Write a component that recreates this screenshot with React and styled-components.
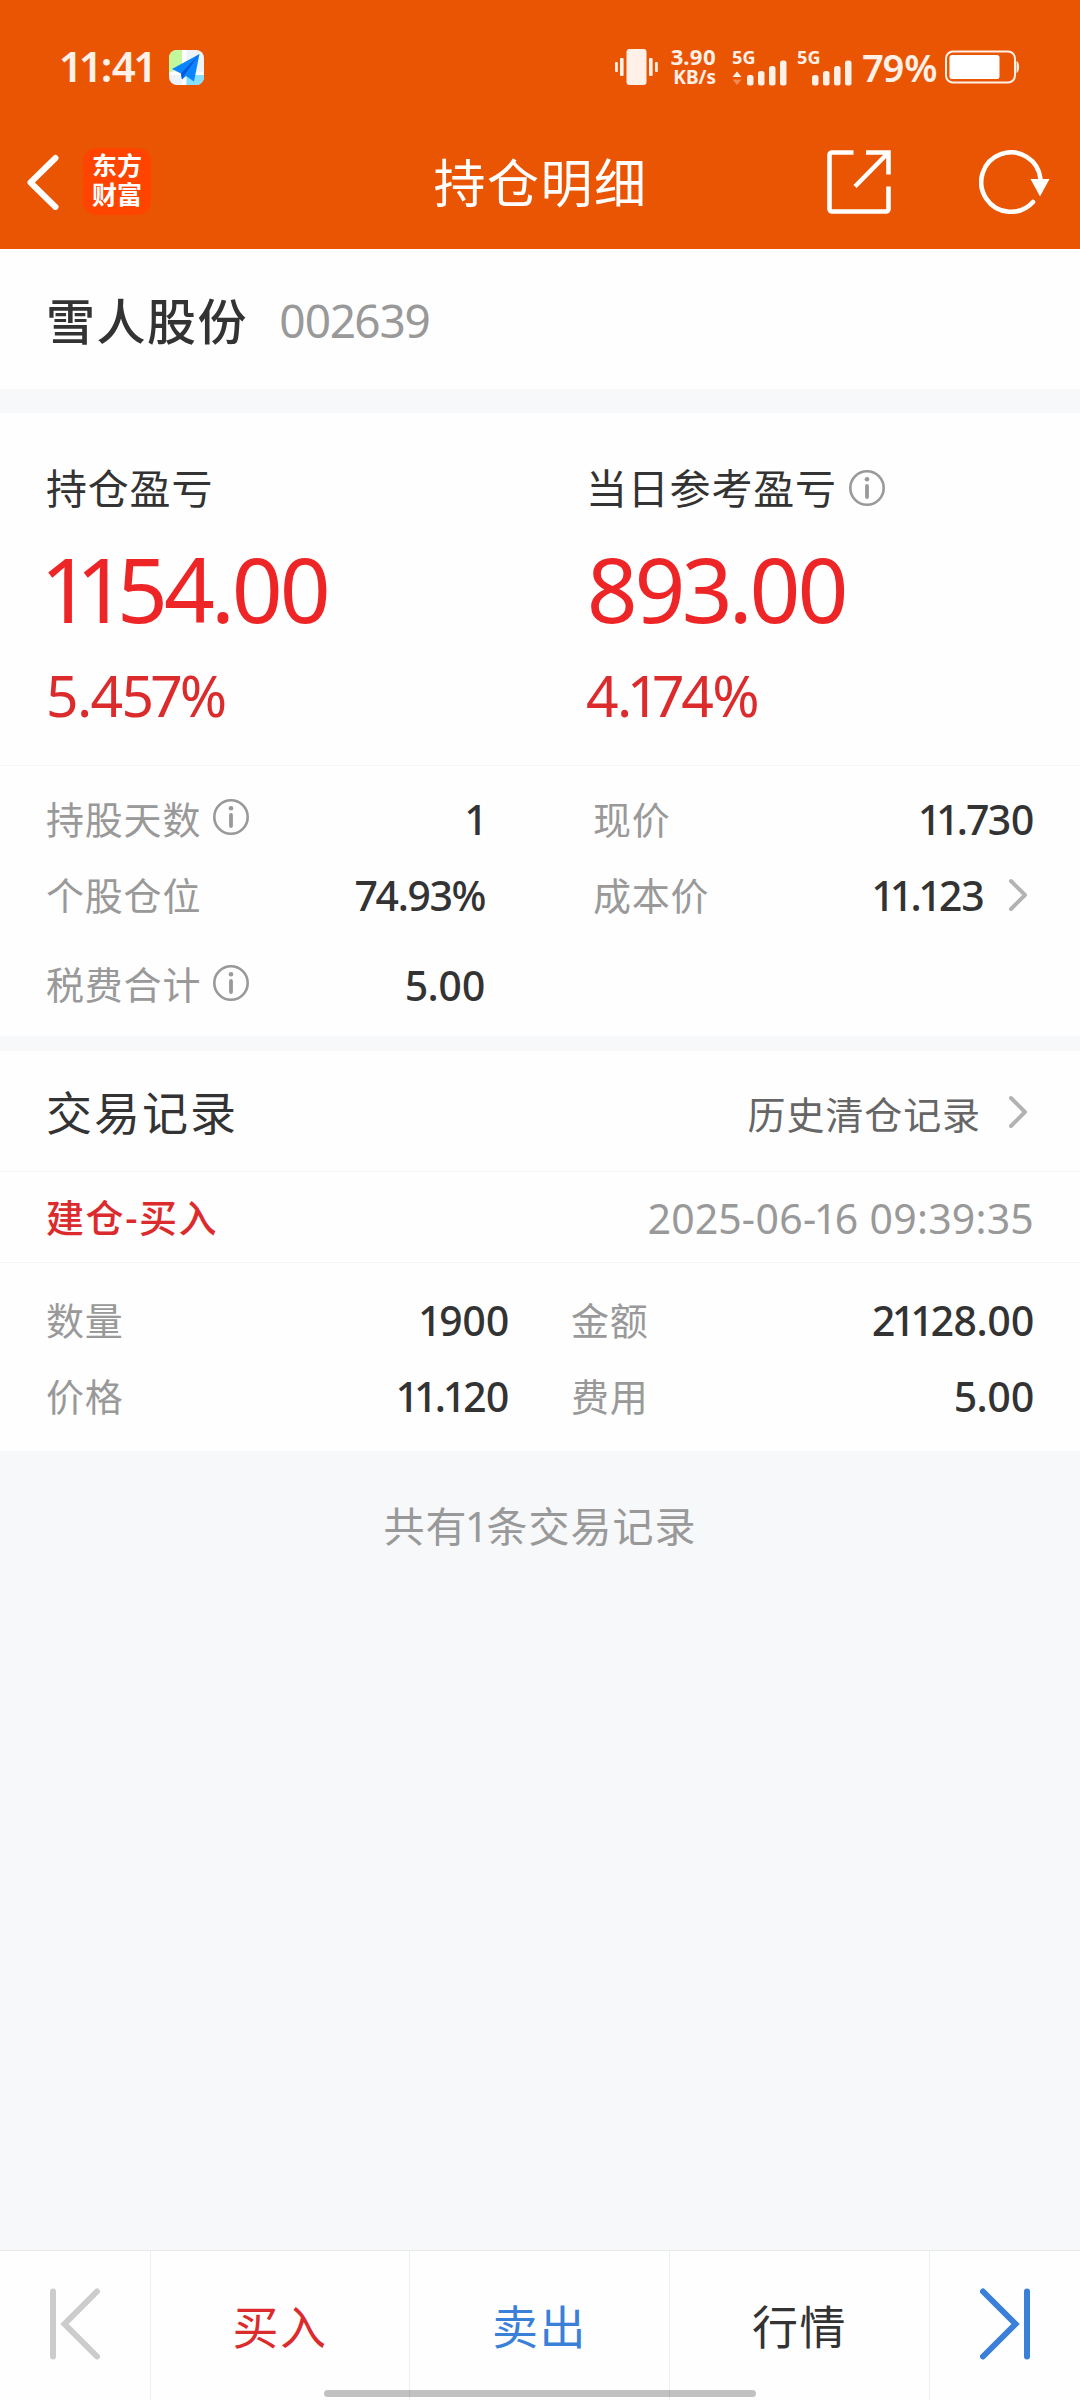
import React from 'react'
import styled, { createGlobalStyle } from 'styled-components'

const GlobalStyle = createGlobalStyle`
	* {
		box-sizing: border-box;
	}

	body {
		margin: 0;
		background: #f7f8fa;
		font-family: 'Noto Sans', 'Noto Sans CJK SC', sans-serif;
		font-variant-numeric: proportional-nums;
		color: #333;
	}
`

const Page = styled.div`
	width: 1080px;
	height: 2400px;
	display: flex;
	flex-direction: column;
	background: #f7f8fa;
	overflow: hidden;
`

const Header = styled.header`
	height: 249px;
	background: #ea5504;
	color: #fff;
`

const StatusBar = styled.div`
	height: 115px;
	padding: 19px 60px 0 61px;
	display: flex;
	align-items: center;
	color: #fff0e8;
`

const Clock = styled.span`
	width: 108px;
	font-size: 42px;
	font-weight: 600;
	line-height: 50px;
	padding-bottom: 2px;
	letter-spacing: -0.6px;
	white-space: nowrap;
`

const StatusRight = styled.div`
	margin-left: auto;
	display: flex;
	align-items: center;
`

const Speed = styled.div`
	width: 46px;
	margin-left: 12px;
	display: flex;
	flex-direction: column;
	align-items: flex-end;
	font-size: 22px;
	font-weight: 700;
	line-height: 21px;
	white-space: nowrap;
`

const SpeedUnit = styled.span`
	font-size: 19px;
`

const Signal = styled.div`
	width: 55px;
	height: 38px;
	margin-left: ${props => props.$gap}px;
	display: flex;
	flex-direction: column;
	position: relative;
`

const SignalLabel = styled.span`
	font-size: 18px;
	font-weight: 700;
	line-height: 18px;
`

const SignalBars = styled.svg`
	position: absolute;
	left: 0;
	top: 0;
`

const Percent = styled.span`
	width: 75px;
	margin: 0 7px 0 11px;
	padding-bottom: 1px;
	font-size: 38px;
	font-weight: 600;
	line-height: 50px;
	letter-spacing: -0.6px;
	white-space: nowrap;
`

const NavBar = styled.div`
	height: 134px;
	padding: 0 30px 1px 26px;
	display: grid;
	grid-template-columns: 1fr auto 1fr;
	align-items: center;
`

const NavLeft = styled.div`
	display: flex;
	align-items: center;
	gap: 23px;
`

const NavRight = styled.div`
	display: flex;
	align-items: center;
	justify-content: flex-end;
	gap: 88px;
`

const Logo = styled.div`
	width: 68px;
	height: 67px;
	border-radius: 14px;
	background: #ff4400;
	font-family: 'Noto Sans CJK SC', sans-serif;
	font-size: 25px;
	font-weight: 700;
	line-height: 29px;
	padding-top: 2px;
	text-align: center;
`

const Title = styled.h1`
	margin: 0;
	padding: 2px 0 0 5px;
	font-size: 52px;
	font-weight: 400;
	line-height: 70px;
	letter-spacing: 1.5px;
`

const Section = styled.section`
	background: #fefefe;
	margin-bottom: ${props => props.$gap || 0}px;
`

const StockRow = styled.div`
	height: 140px;
	padding: 0 46px 1px;
	display: flex;
	align-items: center;
`

const StockName = styled.span`
	font-size: 49px;
	font-weight: 500;
	letter-spacing: 1.5px;
	margin-right: 31px;
`

const StockCode = styled.span`
	padding-top: 2px;
	font-size: 46px;
	color: #999;
	letter-spacing: -1.3px;
`

const Profits = styled.div`
	height: 353px;
	padding: 47px 46px 0;
	display: grid;
	grid-template-columns: 540px 1fr;
	border-bottom: 1px solid #f4f5f6;
`

const ProfitLabel = styled.div`
	display: flex;
	align-items: center;
	gap: 12px;
	font-size: 41px;
	line-height: 56px;
	letter-spacing: 0.8px;
`

const ProfitValue = styled.div`
	margin-top: 23px;
	font-size: 89px;
	line-height: 100px;
	letter-spacing: -3.8px;
	color: #ee2526;
	white-space: nowrap;
`

const ProfitRate = styled.div`
	margin-top: 24px;
	font-size: 57px;
	line-height: 64px;
	letter-spacing: -1.7px;
	color: #dc2b2c;
	white-space: nowrap;
`

const Details = styled.div`
	padding: 15px 46px 0;
	display: grid;
	grid-template-columns: 439px 441px;
	column-gap: 108px;
`

const TradeDetails = styled(Details)`
	padding: 19px 46px 17px;
	grid-template-columns: 463px 463px;
	column-gap: 62px;
`

const Field = styled.div`
	height: ${props => props.$height || 76}px;
	display: flex;
	align-items: center;
`

const FieldLabel = styled.span`
	display: flex;
	align-items: center;
	gap: 12px;
	padding-bottom: 4px;
	font-size: 38px;
	letter-spacing: 0.8px;
	color: #999;
`

const FieldValue = styled.span`
	margin-left: auto;
	font-size: 41px;
	font-weight: 500;
	letter-spacing: ${props => (props.$percent ? '-1.5px' : '-0.7px')};
`

const ArrowSlot = styled.span`
	display: flex;
	margin: 0 6px 0 24px;
`

const RecordsHead = styled.div`
	height: 121px;
	padding: 0 46px 1px;
	display: flex;
	align-items: center;
	justify-content: space-between;
	border-bottom: 1px solid #f4f5f6;
`

const RecordsTitle = styled.h2`
	margin: 0;
	padding-bottom: 2px;
	font-size: 46px;
	font-weight: 400;
	letter-spacing: 2px;
`

const HistoryLink = styled.span`
	display: flex;
	align-items: center;
	gap: 3px;
	padding-top: 3px;
	font-size: 38px;
	letter-spacing: 0.9px;
	color: #666;
`

const TradeHead = styled.div`
	height: 91px;
	padding: 0 46px;
	display: flex;
	align-items: center;
	justify-content: space-between;
	border-bottom: 1px solid #f4f5f6;
`

const TradeType = styled.span`
	padding-bottom: 3px;
	font-size: 38px;
	font-weight: 500;
	letter-spacing: 1.6px;
	color: #dc2b2c;
`

const TradeTime = styled.span`
	padding-top: 1px;
	font-size: 41px;
	color: #999;
	letter-spacing: 0.2px;
`

const Summary = styled.p`
	margin: 46px 0 0;
	font-size: 41px;
	line-height: 58px;
	letter-spacing: 1px;
	text-align: center;
	color: #999;
`

const Footer = styled.footer`
	position: relative;
	height: 150px;
	margin-top: auto;
	display: grid;
	grid-template-columns: 151px 259px 260px 260px 150px;
	background: #fefefe;
	border-top: 1px solid #e8eaec;
`

const FooterItem = styled.button`
	padding: 0 0 3px;
	display: flex;
	align-items: center;
	justify-content: center;
	background: none;
	border: none;
	border-right: 1px solid #eceef0;
	font-family: inherit;
	font-size: 46px;
	letter-spacing: 1.5px;
	color: ${props => props.color || '#333'};

	&:last-of-type {
		border-right: none;
	}
`

const HomeIndicator = styled.div`
	position: absolute;
	left: 324px;
	bottom: 3px;
	width: 432px;
	height: 7px;
	border-radius: 4px;
	background: rgba(0, 0, 0, 0.24);
`

const InfoIcon = () => (
	<svg width="36" height="36" viewBox="0 0 36 36" fill="none">
		<circle cx="18" cy="18" r="16.700" stroke="#999" strokeWidth="2.600" />
		<circle cx="18" cy="9.200" r="2.300" fill="#999" />
		<path d="M18 16v11" stroke="#999" strokeWidth="3.800" strokeLinecap="round" />
	</svg>
)

const ArrowIcon = () => (
	<svg width="20" height="34" viewBox="0 0 20 34" fill="none">
		<path d="M3 3l14 14L3 31" stroke="#b3b3b3" strokeWidth="4" strokeLinecap="round" strokeLinejoin="round" />
	</svg>
)

const BackIcon = () => (
	<svg width="34" height="56" viewBox="0 0 34 56" fill="none">
		<path d="M29.500 4L4.500 28.500l25 24.500" stroke="#fff" strokeWidth="6" strokeLinecap="round" strokeLinejoin="round" />
	</svg>
)

const ShareIcon = () => (
	<svg width="64" height="64" viewBox="0 0 64 64" fill="none" stroke="#fff" strokeWidth="4.600">
		<path d="M26.500 2.500H5a2.500 2.500 0 0 0-2.500 2.500v54a2.500 2.500 0 0 0 2.500 2.500h54a2.500 2.500 0 0 0 2.500-2.500V36.500" />
		<path d="M39 2.500h22.500V24.500M61 3L28 36.500" />
	</svg>
)

const RefreshIcon = () => (
	<svg width="71" height="64" viewBox="0 0 71 64" fill="none">
		<path d="M61.500 29A29.700 29.700 0 1 0 54 52" stroke="#fff" strokeWidth="4.600" strokeLinecap="round" />
		<path d="M51.500 29h19l-9.500 17.500z" fill="#fff" />
	</svg>
)

const MapIcon = () => (
	<svg width="35" height="35" viewBox="0 0 35 35">
		<clipPath id="map">
			<rect width="35" height="35" rx="8" />
		</clipPath>
		<g clipPath="url(#map)">
			<rect width="35" height="35" fill="#eef3f8" />
			<path d="M0 0h13v16L0 23z" fill="#c3f79c" />
			<path d="M13 0h4.500v35H13zM0 22h35v3H0z" fill="#fff" />
			<path d="M17.500 25H35v10H17.500z" fill="#86e0ff" />
			<path d="M30.500 4L3 19l9 4.500 1 6 4-3.500 8 5.500z" fill="#0a84ff" />
			<path d="M30.500 4L12 23.500l1 6 2-4z" fill="#0757d8" />
		</g>
	</svg>
)

const VibrateIcon = () => (
	<svg width="43" height="36" viewBox="0 0 43 36" fill="#fff0e8">
		<rect x="11.500" width="20" height="36" rx="3" />
		<rect x="5" y="9" width="3.600" height="18" rx="1" />
		<rect x="34" y="9" width="3.600" height="18" rx="1" />
		<rect y="13" width="2.800" height="10" rx="1" />
		<rect x="40" y="13" width="2.800" height="10" rx="1" />
	</svg>
)

const BatteryIcon = () => (
	<svg width="75" height="34" viewBox="0 0 75 34">
		<rect x="1" y="1.500" width="69" height="31" rx="7" fill="none" stroke="#fff0e8" strokeWidth="2" />
		<rect x="4.500" y="5" width="50" height="24" rx="2.500" fill="#fff" />
		<path d="M71.500 11c3.500 1 3.500 11 0 12z" fill="#fff0e8" />
	</svg>
)

const SignalMeter = ({ gap, traffic }) => (
	<Signal $gap={gap}>
		<SignalLabel>5G</SignalLabel>
		<SignalBars width="55" height="38" viewBox="0 0 55 38" fill="#fff0e8">
			{traffic && <path d="M.5 29L5 23.500l4.500 5.500z" />}
			{traffic && <path d="M.5 31.500L5 37l4.500-5.500z" opacity="0.35" />}
			<rect x="15" y="27" width="6.500" height="10.500" rx="2.500" />
			<rect x="26" y="23" width="6.500" height="14.500" rx="2.500" />
			<rect x="37" y="18" width="6.500" height="19.500" rx="2.500" />
			<rect x="48" y="12.500" width="6.500" height="25" rx="2.500" />
		</SignalBars>
	</Signal>
)

const FirstIcon = () => (
	<svg width="50" height="72" viewBox="0 0 50 72" fill="none" stroke="#ccc" strokeWidth="6" strokeLinecap="round">
		<path d="M3 3.500v65M47 3.500L14.500 36 47 68.500" />
	</svg>
)

const LastIcon = () => (
	<svg width="50" height="72" viewBox="0 0 50 72" fill="none" stroke="#3a80d9" strokeWidth="6" strokeLinecap="round">
		<path d="M47 3.500v65M3 3.500L35.500 36 3 68.500" />
	</svg>
)

const details = [
	{ label: '持股天数', value: '1', info: true },
	{ label: '现价', value: '11.730' },
	{ label: '个股仓位', value: '74.93%', percent: true },
	{ label: '成本价', value: '11.123', arrow: true },
	{ label: '税费合计', value: '5.00', info: true, height: 103 }
]

const trade = [
	{ label: '数量', value: '1900' },
	{ label: '金额', value: '21128.00' },
	{ label: '价格', value: '11.120' },
	{ label: '费用', value: '5.00' }
]

const renderField = ({ label, value, info, arrow, percent, height }) => (
	<Field key={label} $height={height}>
		<FieldLabel>
			{label}
			{info && <InfoIcon />}
		</FieldLabel>
		<FieldValue $percent={percent}>{value}</FieldValue>
		{arrow && (
			<ArrowSlot>
				<ArrowIcon />
			</ArrowSlot>
		)}
	</Field>
)

const App = () => (
	<Page>
		<GlobalStyle />
		<Header>
			<StatusBar>
				<Clock>11:41</Clock>
				<MapIcon />
				<StatusRight>
					<VibrateIcon />
					<Speed>
						<span>3.90</span>
						<SpeedUnit>KB/s</SpeedUnit>
					</Speed>
					<SignalMeter gap={16} traffic />
					<SignalMeter gap={10} />
					<Percent>79%</Percent>
					<BatteryIcon />
				</StatusRight>
			</StatusBar>
			<NavBar>
				<NavLeft>
					<BackIcon />
					<Logo>
						东方
						<br />
						财富
					</Logo>
				</NavLeft>
				<Title>持仓明细</Title>
				<NavRight>
					<ShareIcon />
					<RefreshIcon />
				</NavRight>
			</NavBar>
		</Header>

		<Section $gap={24}>
			<StockRow>
				<StockName>雪人股份</StockName>
				<StockCode>002639</StockCode>
			</StockRow>
		</Section>

		<Section $gap={15}>
			<Profits>
				<div>
					<ProfitLabel>持仓盈亏</ProfitLabel>
					<ProfitValue>1154.00</ProfitValue>
					<ProfitRate>5.457%</ProfitRate>
				</div>
				<div>
					<ProfitLabel>
						当日参考盈亏
						<InfoIcon />
					</ProfitLabel>
					<ProfitValue>893.00</ProfitValue>
					<ProfitRate>4.174%</ProfitRate>
				</div>
			</Profits>
			<Details>{details.map(renderField)}</Details>
		</Section>

		<Section>
			<RecordsHead>
				<RecordsTitle>交易记录</RecordsTitle>
				<HistoryLink>
					历史清仓记录
					<ArrowSlot>
						<ArrowIcon />
					</ArrowSlot>
				</HistoryLink>
			</RecordsHead>
			<TradeHead>
				<TradeType>建仓-买入</TradeType>
				<TradeTime>2025-06-16 09:39:35</TradeTime>
			</TradeHead>
			<TradeDetails>{trade.map(renderField)}</TradeDetails>
		</Section>

		<Summary>共有1条交易记录</Summary>

		<Footer>
			<FooterItem>
				<FirstIcon />
			</FooterItem>
			<FooterItem color="#dc2b2c">买入</FooterItem>
			<FooterItem color="#3a80d9">卖出</FooterItem>
			<FooterItem>行情</FooterItem>
			<FooterItem>
				<LastIcon />
			</FooterItem>
			<HomeIndicator />
		</Footer>
	</Page>
)

export default App
